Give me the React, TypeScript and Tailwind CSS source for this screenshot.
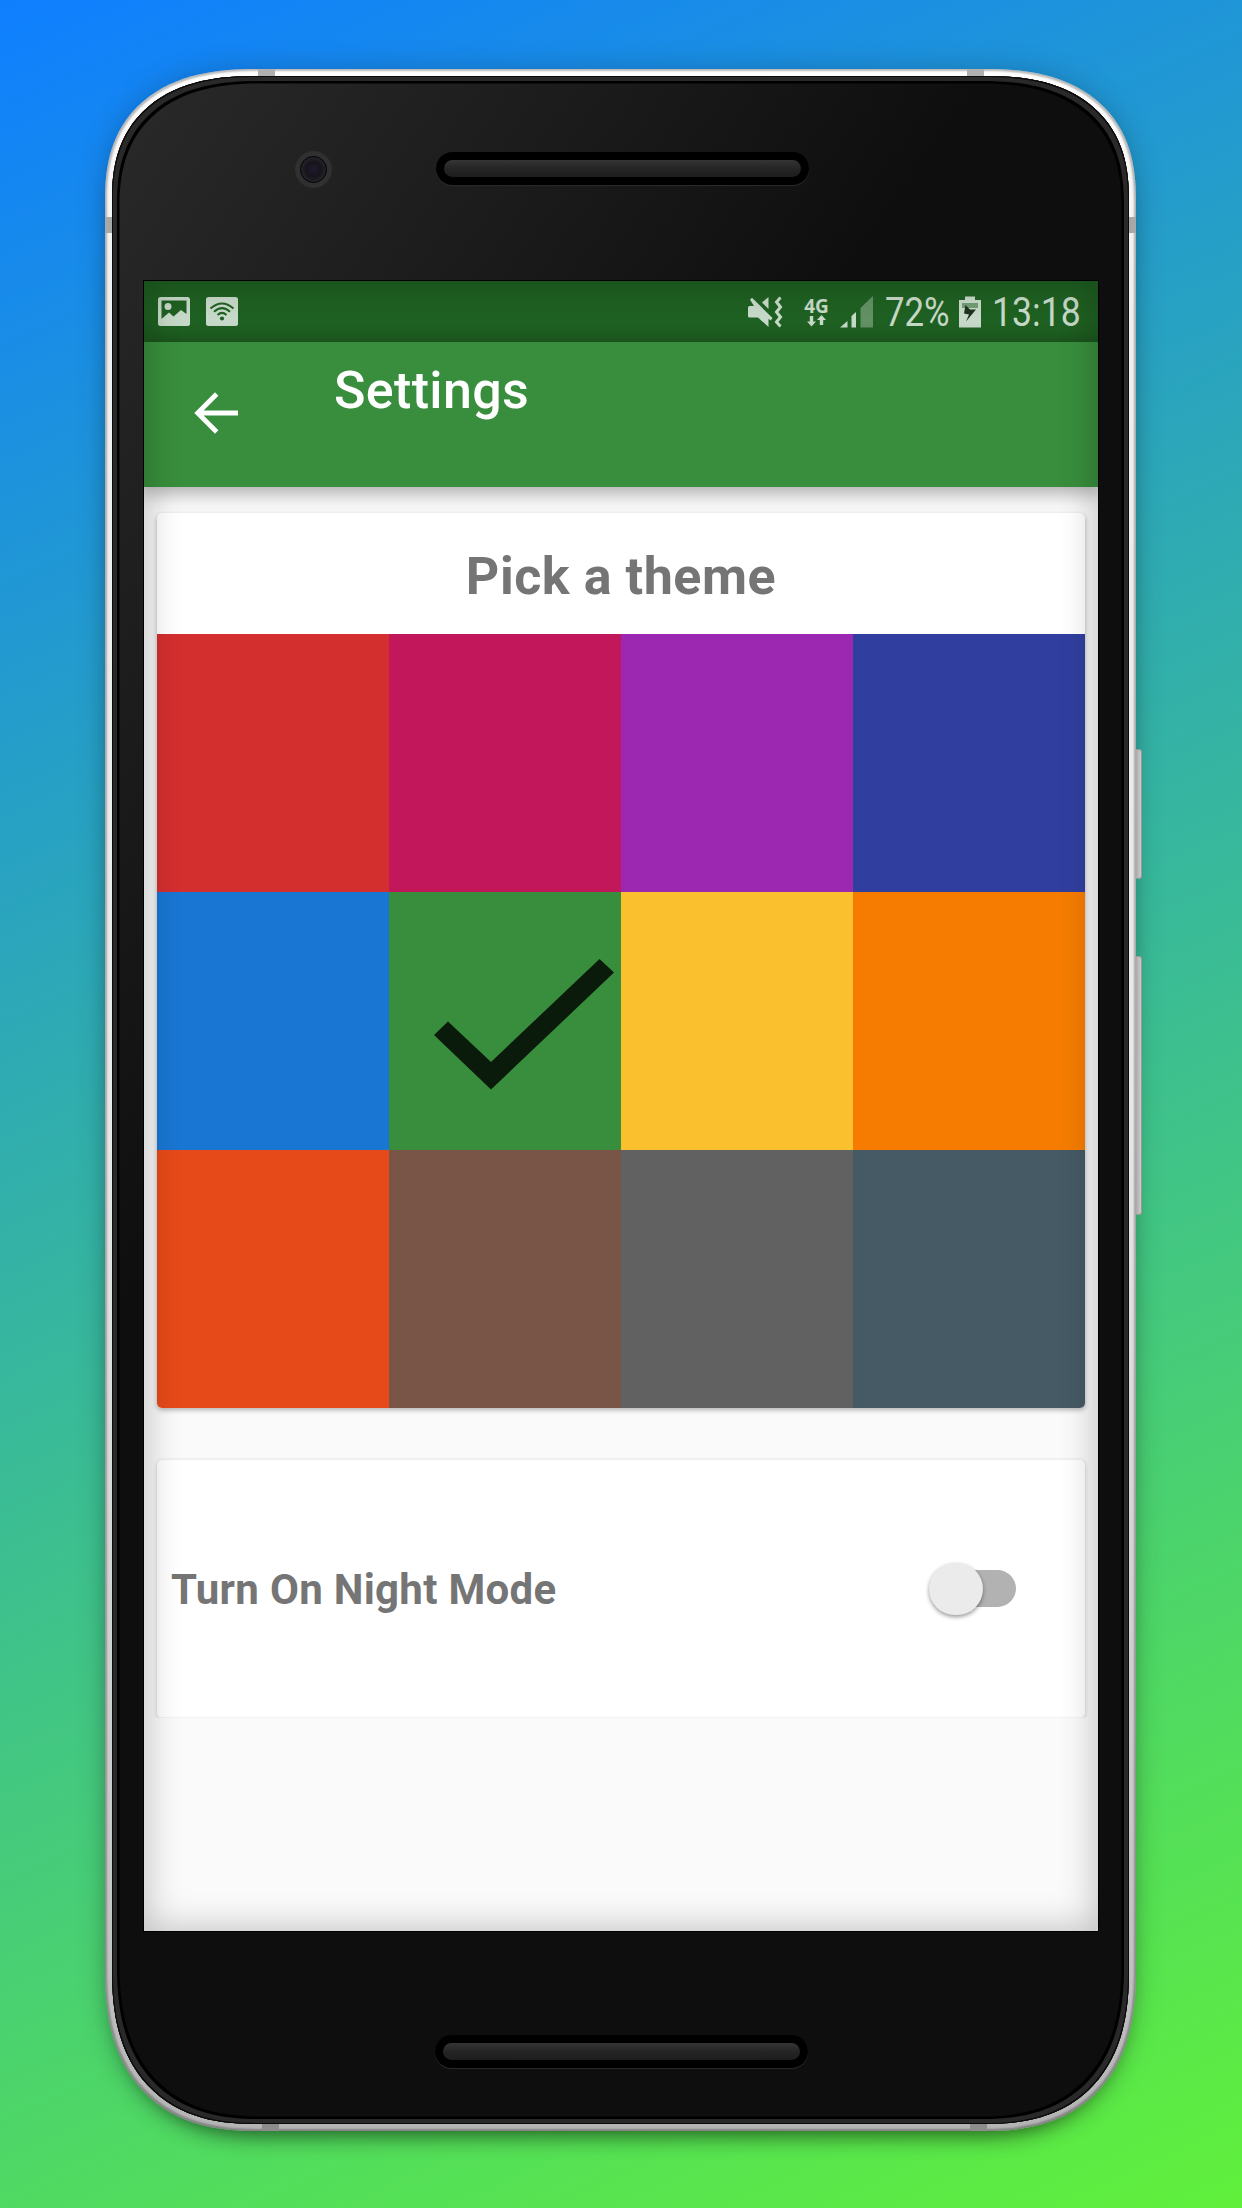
const themes = [
  'bg-[#d32f2f]', 'bg-[#c2185b]', 'bg-[#9c27b0]', 'bg-[#303f9f]',
  'bg-[#1976d2]', 'bg-[#388e3c]', 'bg-[#fbc02d]', 'bg-[#f57c00]',
  'bg-[#e64a19]', 'bg-[#795548]', 'bg-[#616161]', 'bg-[#455a64]',
];
const selected = 5;

function PictureIcon() {
  return (
    <svg className="h-[29px] w-8" viewBox="0 0 32 29" fill="currentColor">
      <path fillRule="evenodd" d="M2.5 0H29.500a2.500 2.500 0 0 1 2.500 2.500V26.500a2.500 2.500 0 0 1-2.500 2.500H2.500A2.500 2.500 0 0 1 0 26.500V2.500A2.500 2.500 0 0 1 2.500 0ZM3.500 3.500V22L11 15.500 15.500 19.500 23 13 28.500 17V3.500Z" />
      <circle cx="10" cy="9.500" r="3.500" />
    </svg>
  );
}

function WifiIcon() {
  return (
    <svg className="h-[29px] w-8" viewBox="0 0 32 29">
      <rect width="32" height="29" rx="2.500" fill="currentColor" />
      <g fill="none" stroke="#1f6122" strokeWidth="2">
        <path d="M4.500 11.500Q16 1.500 27.500 11.500M8 14.800Q16 7.500 24 14.800M11.500 18Q16 13.800 20.500 18" />
      </g>
      <circle cx="16" cy="21.500" r="2.100" fill="#1f6122" />
    </svg>
  );
}

function MuteIcon() {
  return (
    <svg className="h-8 w-[35px]" viewBox="0 0 35 32" fill="currentColor">
      <path d="M0 11.500Q0 10 1.500 10H6L2 3.800 4 1.800 24.500 22 22.700 24.500 20.500 22.800V31L10 21.500H1.500Q0 21.500 0 20Z" />
      <path d="M20.500 1V13L14 6.500Z" />
      <path d="M32.500 1.500L28.500 6 32.500 11 28.500 16 32.500 21 28.500 26 32.500 30.500" fill="none" stroke="currentColor" strokeWidth="3" />
    </svg>
  );
}

function DataArrows() {
  return (
    <svg className="h-3 w-[19px]" viewBox="0 0 19 12" fill="currentColor">
      <path d="M2.800 1H6.200V6.500H9L4.500 11.500 0 6.500H2.800ZM12.800 10V5H10L14.500 0 19 5H16.200V10Z" />
    </svg>
  );
}

function SignalIcon() {
  return (
    <svg className="h-8 w-[33px]" viewBox="0 0 33 32" fill="currentColor">
      <path d="M0 31.500L7.500 25V31.500ZM11.500 20L16 16V31.500H11.500Z" />
      <path d="M20.500 12L33 0V31.500H20.500Z" opacity=".4" />
    </svg>
  );
}

function BatteryIcon() {
  return (
    <svg className="h-8 w-[22px]" viewBox="0 0 22 32">
      <path d="M6 0.500H16V4H22V31.500H0V4H6Z" fill="currentColor" />
      <path d="M3 7H19V12H3Z" fill="#1f6122" opacity=".5" />
      <path d="M6.500 9L11 13.500 17 13.500 7 25.500 10 18.500 5 17.500Z" fill="#1d3320" />
    </svg>
  );
}

function StatusBar() {
  return (
    <div className="flex h-[61.500px] shrink-0 items-start bg-[#1f6122] pt-[15px] pl-[14px] text-[#c7d9c8]">
      <div className="flex gap-4 pt-[1.500px]">
        <PictureIcon />
        <WifiIcon />
      </div>
      <div className="ml-[510px] flex items-start">
        <MuteIcon />
        <div className="ml-[20px] flex w-[27px] flex-col items-center pt-[1.500px]">
          <span className="h-[18px] font-['Open_Sans',sans-serif] text-[19px] leading-[18px] font-bold">4G</span>
          <DataArrows />
        </div>
        <div className="ml-[10px]"><SignalIcon /></div>
        <span className="mt-px ml-[12px] inline-block w-[75px] origin-left scale-x-[.87] text-[40px] leading-8">72%</span>
        <div className="-ml-px"><BatteryIcon /></div>
        <span className="mt-px ml-[11px] inline-block origin-left scale-x-[.89] text-[40px] leading-8">13:18</span>
      </div>
    </div>
  );
}

function AppBar() {
  return (
    <header className="relative flex h-[144.500px] shrink-0 items-start bg-[#388e3c] text-white shadow-[0_3px_18px_3px_rgba(0,0,0,.32)]">
      <svg className="mt-[50px] ml-[50px] h-[42px] w-[44px]" viewBox="0 0 44 42" fill="none" stroke="currentColor" strokeWidth="4.800">
        <path d="M44 21H4M22.700 2L3.700 21 22.700 40" />
      </svg>
      <h1 className="mt-[19px] ml-[96px] text-[52px] leading-[60px] font-medium tracking-[.35px]">Settings</h1>
    </header>
  );
}

function ThemeCard() {
  return (
    <section className="mx-[13px] mt-[26px] h-[895px] shrink-0 rounded-[5px] bg-white shadow-[0_2px_5px_rgba(0,0,0,.3)]">
      <h2 className="h-[121px] pt-[34px] text-center text-[52px] leading-[60px] font-bold tracking-[.55px] text-[#757575]">Pick a theme</h2>
      <div className="grid grid-cols-4 overflow-hidden rounded-b-[5px]">
        {themes.map((color, i) => (
          <div key={color} className={`h-[258px] ${color}`}>
            {i === selected && (
              <svg className="h-full w-full" viewBox="0 0 232 258">
                <path d="M45 143L59 129.500 102 170 210.500 67 225 80.500 102 197.500Z" fill="#0a1a0b" />
              </svg>
            )}
          </div>
        ))}
      </div>
    </section>
  );
}

function NightModeCard() {
  return (
    <section className="mx-[13px] mt-[52px] flex h-[258px] shrink-0 items-center justify-between rounded-[5px] bg-white pr-[69px] pl-[14px] shadow-[0_1px_4px_rgba(0,0,0,.2)] [clip-path:inset(-5px_-5px_0_-5px)]">
      <span className="pt-[2px] text-[42px] leading-[50px] font-bold tracking-[.3px] text-[#757575]">Turn On Night Mode</span>
      <button className="flex h-[53px] w-[87px] items-center">
        <span className="z-10 h-[52px] w-[54px] shrink-0 rounded-full bg-[#ebebeb] shadow-[0_2px_4px_rgba(0,0,0,.4)]" />
        <span className="-ml-[27px] h-[37px] w-[60px] shrink-0 rounded-r-full bg-[#b2b2b2]" />
      </button>
    </section>
  );
}

function Grille() {
  return (
    <div className="flex h-[33px] w-[373px] items-center rounded-full bg-black px-2 shadow-[0_1px_1px_#2c2c2c]">
      <div className="h-[17px] w-full rounded-full bg-linear-to-b from-[#353535] via-[#252525] to-[#1d1d1d]" />
    </div>
  );
}

export default function App() {
  return (
    <div className="h-[2208px] w-[1242px] overflow-hidden bg-[linear-gradient(156deg,#0f7fff,#60f03b)] pt-[69px] pl-[105px] font-[Roboto,sans-serif]">
      <div className="relative h-[2061.500px] w-[1031px] rounded-[150px_150px_150px_150px/130px_130px_160px_160px] bg-[linear-gradient(#fff,#f0f0f0_10%,#e8e8e8_50%,#c4c4c4_90%,#b4b4b4)] p-[7px] shadow-[inset_0_0_2px_2px_rgba(0,0,0,.28),0_0_30px_rgba(0,0,0,.2),0_14px_20px_-10px_rgba(0,0,0,.5)] [corner-shape:superellipse(1.26)]">
        <div className="absolute top-0 left-[153px] h-[7px] w-[17px] bg-[#b0b0b0]" />
        <div className="absolute top-0 left-[862px] h-[7px] w-[17px] bg-[#b0b0b0]" />
        <div className="absolute bottom-0 left-[157px] h-[7px] w-[17px] bg-[#8c8c8c]" />
        <div className="absolute bottom-0 left-[865px] h-[7px] w-[17px] bg-[#8c8c8c]" />
        <div className="absolute top-[147.500px] left-0 h-[16px] w-[7px] bg-[#a8a8a8]" />
        <div className="absolute top-[147.500px] right-0 h-[16px] w-[7px] bg-[#a8a8a8]" />
        <div className="absolute top-[680px] left-[1031px] h-[130px] w-[6px] rounded-r-[3px] border-y border-r border-[#999] bg-linear-to-r from-[#aaa] to-[#ccc]" />
        <div className="absolute top-[887px] left-[1031px] h-[259px] w-[6px] rounded-r-[3px] border-y border-r border-[#999] bg-linear-to-r from-[#aaa] to-[#ccc]" />
        <div className="flex h-full flex-col rounded-[143px_143px_143px_143px/123px_123px_153px_153px] bg-[linear-gradient(125deg,#2a2a2a,#1b1b1b_20%,#0e0e0e_36%)] shadow-[inset_0_0_0_1px_#0a0a0a,inset_0_0_0_5px_#292929,inset_0_0_0_7.500px_#000] [corner-shape:superellipse(1.26)]">
          <div className="flex h-[204.500px] shrink-0 items-start pt-[74px] pl-[183px]">
            <div className="mt-px flex size-[37px] items-center justify-center rounded-full bg-[#303030]">
              <div className="size-[27px] rounded-full border border-black bg-[radial-gradient(circle,#211a30,#16141b_40%,#252329_70%,#0c0c0e)]" />
            </div>
            <div className="mt-[2px] ml-[104px]"><Grille /></div>
          </div>
          <main className="relative ml-[32px] flex h-[1650.500px] w-[954px] shrink-0 flex-col overflow-hidden bg-[#fafafa] ring-1 ring-black">
            <StatusBar />
            <AppBar />
            <ThemeCard />
            <NightModeCard />
            <div className="pointer-events-none absolute inset-0 shadow-[inset_0_0_34px_4px_rgba(0,0,0,.22)]" />
          </main>
          <div className="flex justify-center pt-[103.500px] pl-[1px]"><Grille /></div>
        </div>
      </div>
    </div>
  );
}
